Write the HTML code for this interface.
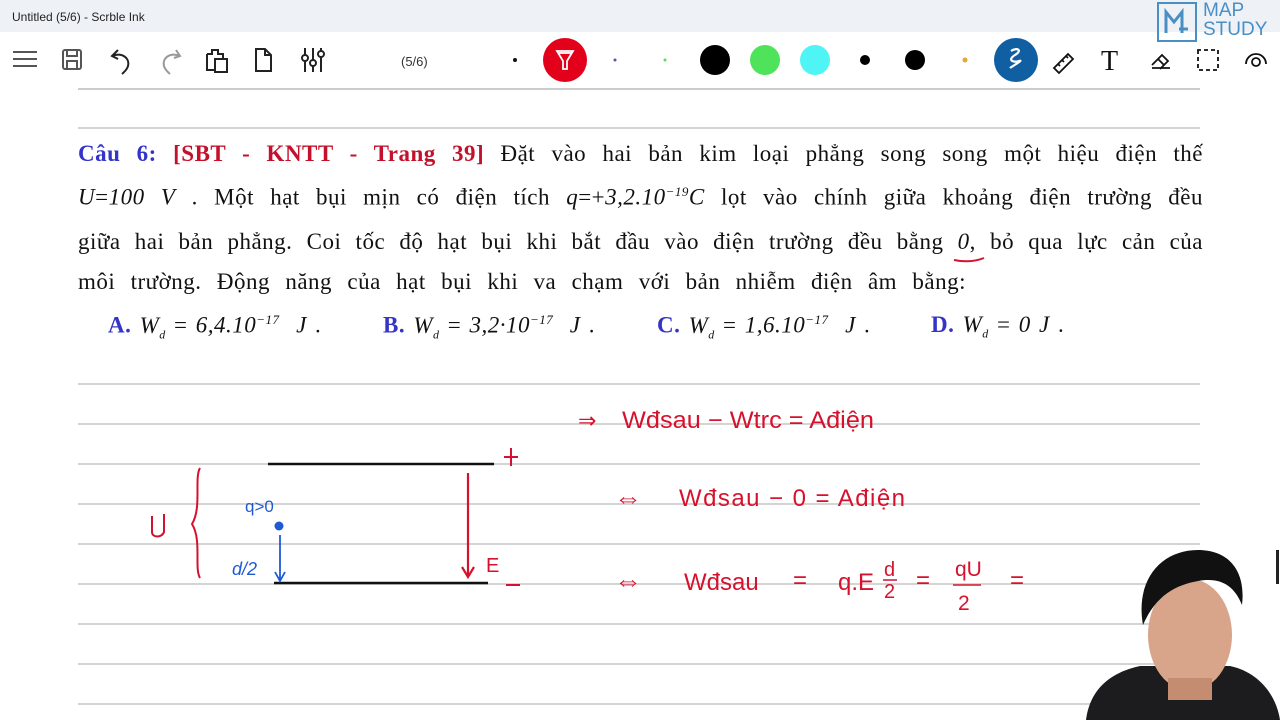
<!DOCTYPE html>
<html><head><meta charset="utf-8"><style>
*{margin:0;padding:0;box-sizing:border-box}
body{width:1280px;height:720px;overflow:hidden;background:#fff;position:relative;font-family:"Liberation Serif",serif}
.title{position:absolute;left:0;top:0;width:1280px;height:32px;background:#eef2f7;font:12px "Liberation Sans",sans-serif;color:#222;padding:10px 12px}
.rule{position:absolute;left:78px;width:1122px;height:2px;background:#d4d4d4}
.ln{position:absolute;left:78px;width:1125px;font-size:23px;letter-spacing:0.5px;color:#111;text-align:justify;text-align-last:justify;white-space:nowrap}
.i{font-style:italic}
.b{color:#3434c8;font-weight:bold}
.r{color:#c4102a;font-weight:bold}
sup{font-size:13px;font-style:italic}
sub{font-size:12px;font-style:italic}
.opt{position:absolute;top:312px;font-size:23px;color:#111;letter-spacing:0.5px;word-spacing:2px}
.hw{font-family:"Liberation Sans",sans-serif;fill:#d6112d}
</style></head><body>
<div class="title">Untitled (5/6) - Scrble Ink</div>
<svg style="position:absolute;left:0;top:32px" width="1280" height="56">
<g stroke="#555" stroke-width="2" fill="none">
<path d="M13 52h24M13 59h24M13 66h24" transform="translate(0,-32)"/>
<g transform="translate(0,-32)">
<rect x="63" y="50" width="18" height="19" rx="2"/><rect x="67" y="50" width="10" height="6"/><rect x="67" y="61" width="10" height="8"/>
<path d="M118 50l-6 6 6 3M112 56c10-4 18 2 16 10c-1 4-4 6-6 8" stroke="#222"/>
<path d="M176 50l4 6-6 2M180 56c-10-4-18 2-16 10c1 4 4 6 6 8" stroke="#999"/>
<path d="M207 54h5v-4h6v4h5v6M207 54v16h8M215 59h12v13h-12z" stroke="#222"/>
<path d="M256 49h9l6 6v16h-15zM265 49v6h6" stroke="#222"/>
<path d="M305 48v24M313 48v24M321 48v24" stroke="#222"/><circle cx="305" cy="58" r="3" fill="#fff" stroke="#222"/><circle cx="313" cy="63" r="3" fill="#fff" stroke="#222"/><circle cx="321" cy="54" r="3" fill="#fff" stroke="#222"/>
</g></g>
<text x="401" y="34" font-family="Liberation Sans" font-size="13" fill="#333">(5/6)</text>
<circle cx="515" cy="28" r="2" fill="#111"/>
<circle cx="565" cy="28" r="22" fill="#e3001b"/>
<path d="M557 19h16l-6 10v8h-4v-8z" stroke="#fff" stroke-width="1.8" fill="none"/><path d="M558 21h14" stroke="#fff" stroke-width="1.8"/>
<circle cx="615" cy="28" r="1.5" fill="#55a"/>
<circle cx="665" cy="28" r="1.5" fill="#5d5"/>
<circle cx="715" cy="28" r="15" fill="#000"/>
<circle cx="765" cy="28" r="15" fill="#4ee35a"/>
<circle cx="815" cy="28" r="15" fill="#4ff4f4"/>
<circle cx="865" cy="28" r="5" fill="#000"/>
<circle cx="915" cy="28" r="10" fill="#000"/>
<circle cx="965" cy="28" r="2.5" fill="#e6a63a"/>
<circle cx="1016" cy="28" r="22" fill="#115fa3"/>
<path d="M1011 19c6-4 12-1 4 4s-2 8 4 6s-8 6-9 7" stroke="#fff" stroke-width="2.2" fill="none"/>
<g stroke="#111" stroke-width="1.8" fill="none">
<path d="M1054 36l14-14 5 5-14 14z M1058 32l2 2M1062 28l2 2M1066 24l2 2"/>
<path d="M1152 36h18M1152 33l10-10 6 6-8 8M1158 27l6 6"/>
<path d="M1198 18v20h20v-20z" stroke-dasharray="4 3"/>
<circle cx="1256" cy="30" r="4"/><path d="M1246 32a10 10 0 0 1 20 0"/>
</g>
<text x="1101" y="38" font-family="Liberation Serif" font-size="28" fill="#111">T</text>
</svg>
<svg style="position:absolute;left:1157px;top:2px" width="42" height="40"><rect x="1" y="1" width="38" height="38" fill="none" stroke="#4a8fc4" stroke-width="2"/><path d="M9 31V10l8 10 8-10v21M22 27h9" stroke="#4a8fc4" stroke-width="3" fill="none"/></svg>
<div style="position:absolute;left:1203px;top:1px;font:19px/19px 'Liberation Sans',sans-serif;color:#4a8fc4">MAP<br>STUDY</div>
<div class="rule" style="top:88px;background:#ccc"></div>
<div class="rule" style="top:127px"></div>
<div class="ln" style="top:141px"><span class="b">Câu 6:</span> <span class="r">[SBT - KNTT - Trang 39]</span> Đặt vào hai bản kim loại phẳng song song một hiệu điện thế</div>
<div class="ln" style="top:184px"><span class="i">U</span>=<span class="i">100 V</span> . Một hạt bụi mịn có điện tích <span class="i">q</span>=+<span class="i">3,2.10</span><sup>−19</sup><span class="i">C</span> lọt vào chính giữa khoảng điện trường đều</div>
<div class="ln" style="top:229px">giữa hai bản phẳng. Coi tốc độ hạt bụi khi bắt đầu vào điện trường đều bằng <span class="i">0</span>, bỏ qua lực cản của</div>
<div class="ln" style="top:269px;width:888px">môi trường. Động năng của hạt bụi khi va chạm với bản nhiễm điện âm bằng:</div>
<div class="opt" style="left:108px"><span class="b">A.</span> <span class="i">W<sub>d</sub></span> = <span class="i">6,4.10</span><sup>−17</sup> &nbsp;<span class="i">J</span> .</div>
<div class="opt" style="left:383px"><span class="b">B.</span> <span class="i">W<sub>d</sub></span> = <span class="i">3,2·10</span><sup>−17</sup> &nbsp;<span class="i">J</span> .</div>
<div class="opt" style="left:657px"><span class="b">C.</span> <span class="i">W<sub>d</sub></span> = <span class="i">1,6.10</span><sup>−17</sup> &nbsp;<span class="i">J</span> .</div>
<div class="opt" style="left:931px"><span class="b">D.</span> <span class="i">W<sub>d</sub></span> = <span class="i">0 J</span> .</div>
<div class="rule" style="top:383px"></div>
<div class="rule" style="top:423px"></div>
<div class="rule" style="top:463px"></div>
<div class="rule" style="top:503px"></div>
<div class="rule" style="top:543px"></div>
<div class="rule" style="top:583px"></div>
<div class="rule" style="top:623px"></div>
<div class="rule" style="top:663px"></div>
<div class="rule" style="top:703px"></div>
<svg style="position:absolute;left:0;top:0" width="1280" height="720">
<path d="M984 258c-10 4-20 4-30 2" stroke="#d6112d" stroke-width="2" fill="none"/>
<path d="M268 464h226M274 583h214" stroke="#111" stroke-width="2.5"/>
<path d="M468 473v104M462 567l6 10 6-10" stroke="#d6112d" stroke-width="2.2" fill="none"/>
<path d="M511 448v18M504 457h14M506 585h14" stroke="#d6112d" stroke-width="2"/>
<path d="M200 468c-6 10 2 40-8 56c10 16 2 44 8 54" stroke="#d6112d" stroke-width="2" fill="none"/>
<path d="M152 516v16c0 6 10 6 12 0v-18" stroke="#d6112d" stroke-width="2" fill="none"/>
<text x="486" y="572" class="hw" font-size="20">E</text>
<circle cx="279" cy="526" r="4.5" fill="#1f5ad6"/>
<path d="M280 535v46M275 572l5 9 5-9" stroke="#1f5ad6" stroke-width="1.8" fill="none"/>
<text x="245" y="512" font-family="Liberation Sans" font-size="17" fill="#1f5ad6">q&gt;0</text>
<text x="232" y="575" font-family="Liberation Sans" font-size="18" fill="#1f5ad6" font-style="italic">d/2</text>
<g class="hw" font-size="24">
<text x="578" y="428" font-size="22">⇒</text>
<text x="622" y="428" textLength="252" lengthAdjust="spacingAndGlyphs">Wđsau − Wtrc  =  Ađiện</text>
<text x="614" y="507" font-size="28">⇔</text>
<text x="679" y="506" textLength="226" lengthAdjust="spacing">Wđsau − 0 = Ađiện</text>
<text x="614" y="590" font-size="28">⇔</text>
<text x="684" y="590">Wđsau</text>
<text x="793" y="588">=</text>
<text x="838" y="590">q.E</text>
<text x="884" y="576" font-size="20">d</text><text x="884" y="598" font-size="20">2</text>
<text x="916" y="588">=</text>
<text x="955" y="576" font-size="21">qU</text><text x="958" y="610" font-size="21">2</text>
<text x="1010" y="588">=</text>
</g>
<path d="M883 580h14M953 585h28" stroke="#d6112d" stroke-width="1.5"/>
<!-- person -->
<path d="M1086 720c4-32 26-48 54-54h90c28 6 46 28 50 54z" fill="#1c1c1e"/>
<ellipse cx="1190" cy="635" rx="42" ry="56" fill="#d9a58a"/>
<path d="M1143 625c-8-45 18-75 55-75c32 0 48 22 44 55c-8-20-22-28-44-24c-22 4-42 14-55 44z" fill="#111"/>
<rect x="1168" y="678" width="44" height="22" fill="#c48d72"/>
<rect x="1276" y="550" width="3" height="34" fill="#222"/>
</svg>
</body></html>
